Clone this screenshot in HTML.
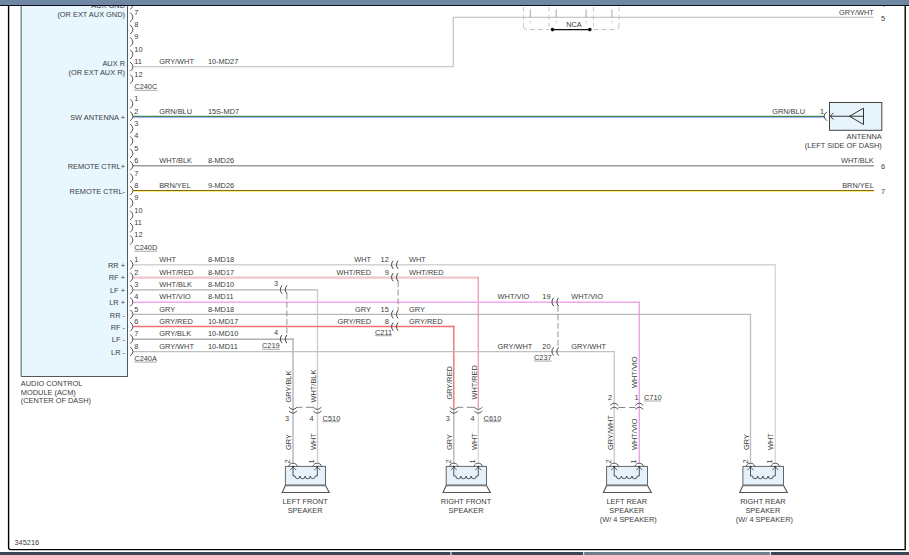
<!DOCTYPE html>
<html><head><meta charset="utf-8"><style>
html,body{margin:0;padding:0;background:#fff;width:909px;height:555px;overflow:hidden}
svg{position:absolute;left:0;top:0;font-family:"Liberation Sans",sans-serif}
</style></head><body>
<svg width="909" height="555" viewBox="0 0 909 555">
<rect x="0" y="0" width="909" height="555" fill="#fff"/>
<rect x="21.4" y="3" width="106.1" height="373.50" fill="#e8f6fe" stroke="#585858" stroke-width="1"/>
<line x1="21.20" y1="5.00" x2="21.20" y2="376.50" stroke="#929696" stroke-width="1.4" />
<polyline points="133.00,66.72 453.30,66.72 453.30,17.30 873.50,17.30" fill="none" stroke="#c8c8c8" stroke-width="1.3" />
<line x1="133.00" y1="116.39" x2="824.00" y2="116.39" stroke="#3a8a5c" stroke-width="1.2" />
<line x1="133.00" y1="117.54" x2="824.00" y2="117.54" stroke="#a8a0f8" stroke-width="0.9" />
<line x1="133.00" y1="165.76" x2="874.00" y2="165.76" stroke="#9c9c9c" stroke-width="1.3" />
<line x1="133.00" y1="190.52" x2="874.00" y2="190.52" stroke="#8a6810" stroke-width="1.1" />
<line x1="133.00" y1="191.62" x2="874.00" y2="191.62" stroke="#f4ea60" stroke-width="0.9" />
<line x1="133.00" y1="264.80" x2="776.00" y2="264.80" stroke="#d4d4d4" stroke-width="1.4" />
<line x1="775.30" y1="264.10" x2="775.30" y2="463.20" stroke="#d6d6d6" stroke-width="1.3" />
<line x1="133.00" y1="276.88" x2="478.30" y2="276.88" stroke="#d8cfc8" stroke-width="0.9" />
<line x1="133.00" y1="277.98" x2="478.90" y2="277.98" stroke="#f4a0b0" stroke-width="1.2" />
<line x1="478.30" y1="276.88" x2="478.30" y2="408.00" stroke="#f29aa8" stroke-width="1.3" />
<line x1="478.30" y1="408.00" x2="478.30" y2="463.20" stroke="#d4d4d4" stroke-width="1.3" />
<line x1="133.00" y1="289.86" x2="318.20" y2="289.86" stroke="#b2b2b2" stroke-width="1.4" />
<line x1="317.50" y1="289.16" x2="317.50" y2="463.20" stroke="#cecece" stroke-width="1.4" />
<line x1="133.00" y1="302.34" x2="640.00" y2="302.34" stroke="#f0a8f0" stroke-width="1.5" />
<line x1="639.30" y1="301.64" x2="639.30" y2="463.20" stroke="#eca4ec" stroke-width="1.5" />
<line x1="133.00" y1="314.42" x2="751.20" y2="314.42" stroke="#b8b8b8" stroke-width="1.4" />
<line x1="750.50" y1="313.72" x2="750.50" y2="463.20" stroke="#bcbcbc" stroke-width="1.3" />
<line x1="133.00" y1="326.50" x2="454.50" y2="326.50" stroke="#f07070" stroke-width="1.5" />
<line x1="453.80" y1="325.80" x2="453.80" y2="408.00" stroke="#f07474" stroke-width="1.4" />
<line x1="453.80" y1="408.00" x2="453.80" y2="463.20" stroke="#b4b4b4" stroke-width="1.4" />
<line x1="133.00" y1="339.18" x2="293.80" y2="339.18" stroke="#b0b0b0" stroke-width="1.6" />
<line x1="293.00" y1="338.38" x2="293.00" y2="463.20" stroke="#b8b8b8" stroke-width="1.5" />
<line x1="133.00" y1="351.66" x2="614.90" y2="351.66" stroke="#c0c0c0" stroke-width="1.4" />
<line x1="614.20" y1="350.96" x2="614.20" y2="463.20" stroke="#c4c4c4" stroke-width="1.3" />
<path d="M130.2,0.22 Q135.6,4.82 130.2,9.42" fill="none" stroke="#4c4c4c" stroke-width="0.95" />
<text x="134.30" y="2.22" text-anchor="start" font-size="7.4" fill="#3c3c3c" >6</text>
<path d="M130.2,12.60 Q135.6,17.20 130.2,21.80" fill="none" stroke="#4c4c4c" stroke-width="0.95" />
<text x="134.30" y="14.60" text-anchor="start" font-size="7.4" fill="#3c3c3c" >7</text>
<path d="M130.2,24.98 Q135.6,29.58 130.2,34.18" fill="none" stroke="#4c4c4c" stroke-width="0.95" />
<text x="134.30" y="26.98" text-anchor="start" font-size="7.4" fill="#3c3c3c" >8</text>
<path d="M130.2,37.36 Q135.6,41.96 130.2,46.56" fill="none" stroke="#4c4c4c" stroke-width="0.95" />
<text x="134.30" y="39.36" text-anchor="start" font-size="7.4" fill="#3c3c3c" >9</text>
<path d="M130.2,49.74 Q135.6,54.34 130.2,58.94" fill="none" stroke="#4c4c4c" stroke-width="0.95" />
<text x="134.30" y="51.74" text-anchor="start" font-size="7.4" fill="#3c3c3c" >10</text>
<path d="M130.2,62.12 Q135.6,66.72 130.2,71.32" fill="none" stroke="#4c4c4c" stroke-width="0.95" />
<text x="134.30" y="64.12" text-anchor="start" font-size="7.4" fill="#3c3c3c" >11</text>
<path d="M130.2,74.50 Q135.6,79.10 130.2,83.70" fill="none" stroke="#4c4c4c" stroke-width="0.95" />
<text x="134.30" y="76.50" text-anchor="start" font-size="7.4" fill="#3c3c3c" >12</text>
<path d="M130.2,99.26 Q135.6,103.86 130.2,108.46" fill="none" stroke="#4c4c4c" stroke-width="0.95" />
<text x="134.30" y="101.26" text-anchor="start" font-size="7.4" fill="#3c3c3c" >1</text>
<path d="M130.2,111.64 Q135.6,116.24 130.2,120.84" fill="none" stroke="#4c4c4c" stroke-width="0.95" />
<text x="134.30" y="113.64" text-anchor="start" font-size="7.4" fill="#3c3c3c" >2</text>
<path d="M130.2,124.02 Q135.6,128.62 130.2,133.22" fill="none" stroke="#4c4c4c" stroke-width="0.95" />
<text x="134.30" y="126.02" text-anchor="start" font-size="7.4" fill="#3c3c3c" >3</text>
<path d="M130.2,136.40 Q135.6,141.00 130.2,145.60" fill="none" stroke="#4c4c4c" stroke-width="0.95" />
<text x="134.30" y="138.40" text-anchor="start" font-size="7.4" fill="#3c3c3c" >4</text>
<path d="M130.2,148.78 Q135.6,153.38 130.2,157.98" fill="none" stroke="#4c4c4c" stroke-width="0.95" />
<text x="134.30" y="150.78" text-anchor="start" font-size="7.4" fill="#3c3c3c" >5</text>
<path d="M130.2,161.16 Q135.6,165.76 130.2,170.36" fill="none" stroke="#4c4c4c" stroke-width="0.95" />
<text x="134.30" y="163.16" text-anchor="start" font-size="7.4" fill="#3c3c3c" >6</text>
<path d="M130.2,173.54 Q135.6,178.14 130.2,182.74" fill="none" stroke="#4c4c4c" stroke-width="0.95" />
<text x="134.30" y="175.54" text-anchor="start" font-size="7.4" fill="#3c3c3c" >7</text>
<path d="M130.2,185.92 Q135.6,190.52 130.2,195.12" fill="none" stroke="#4c4c4c" stroke-width="0.95" />
<text x="134.30" y="187.92" text-anchor="start" font-size="7.4" fill="#3c3c3c" >8</text>
<path d="M130.2,198.30 Q135.6,202.90 130.2,207.50" fill="none" stroke="#4c4c4c" stroke-width="0.95" />
<text x="134.30" y="200.30" text-anchor="start" font-size="7.4" fill="#3c3c3c" >9</text>
<path d="M130.2,210.68 Q135.6,215.28 130.2,219.88" fill="none" stroke="#4c4c4c" stroke-width="0.95" />
<text x="134.30" y="212.68" text-anchor="start" font-size="7.4" fill="#3c3c3c" >10</text>
<path d="M130.2,223.06 Q135.6,227.66 130.2,232.26" fill="none" stroke="#4c4c4c" stroke-width="0.95" />
<text x="134.30" y="225.06" text-anchor="start" font-size="7.4" fill="#3c3c3c" >11</text>
<path d="M130.2,235.44 Q135.6,240.04 130.2,244.64" fill="none" stroke="#4c4c4c" stroke-width="0.95" />
<text x="134.30" y="237.44" text-anchor="start" font-size="7.4" fill="#3c3c3c" >12</text>
<path d="M130.2,260.20 Q135.6,264.80 130.2,269.40" fill="none" stroke="#4c4c4c" stroke-width="0.95" />
<text x="134.30" y="262.20" text-anchor="start" font-size="7.4" fill="#3c3c3c" >1</text>
<path d="M130.2,272.58 Q135.6,277.18 130.2,281.78" fill="none" stroke="#4c4c4c" stroke-width="0.95" />
<text x="134.30" y="274.58" text-anchor="start" font-size="7.4" fill="#3c3c3c" >2</text>
<path d="M130.2,284.96 Q135.6,289.56 130.2,294.16" fill="none" stroke="#4c4c4c" stroke-width="0.95" />
<text x="134.30" y="286.96" text-anchor="start" font-size="7.4" fill="#3c3c3c" >3</text>
<path d="M130.2,297.34 Q135.6,301.94 130.2,306.54" fill="none" stroke="#4c4c4c" stroke-width="0.95" />
<text x="134.30" y="299.34" text-anchor="start" font-size="7.4" fill="#3c3c3c" >4</text>
<path d="M130.2,309.72 Q135.6,314.32 130.2,318.92" fill="none" stroke="#4c4c4c" stroke-width="0.95" />
<text x="134.30" y="311.72" text-anchor="start" font-size="7.4" fill="#3c3c3c" >5</text>
<path d="M130.2,322.10 Q135.6,326.70 130.2,331.30" fill="none" stroke="#4c4c4c" stroke-width="0.95" />
<text x="134.30" y="324.10" text-anchor="start" font-size="7.4" fill="#3c3c3c" >6</text>
<path d="M130.2,334.48 Q135.6,339.08 130.2,343.68" fill="none" stroke="#4c4c4c" stroke-width="0.95" />
<text x="134.30" y="336.48" text-anchor="start" font-size="7.4" fill="#3c3c3c" >7</text>
<path d="M130.2,346.86 Q135.6,351.46 130.2,356.06" fill="none" stroke="#4c4c4c" stroke-width="0.95" />
<text x="134.30" y="348.86" text-anchor="start" font-size="7.4" fill="#3c3c3c" >8</text>
<text x="134.30" y="89.30" text-anchor="start" font-size="7.4" fill="#3c3c3c" >C240C</text>
<line x1="134.30" y1="90.30" x2="157.30" y2="90.30" stroke="#8a8a8a" stroke-width="0.75" />
<text x="134.30" y="250.24" text-anchor="start" font-size="7.4" fill="#3c3c3c" >C240D</text>
<line x1="134.30" y1="251.24" x2="157.30" y2="251.24" stroke="#8a8a8a" stroke-width="0.75" />
<text x="134.30" y="361.06" text-anchor="start" font-size="7.4" fill="#3c3c3c" >C240A</text>
<line x1="134.30" y1="362.06" x2="156.80" y2="362.06" stroke="#8a8a8a" stroke-width="0.75" />
<text x="159.20" y="64.12" text-anchor="start" font-size="7.4" fill="#3c3c3c" >GRY/WHT</text>
<text x="207.90" y="64.12" text-anchor="start" font-size="7.4" fill="#3c3c3c" >10-MD27</text>
<text x="159.20" y="113.64" text-anchor="start" font-size="7.4" fill="#3c3c3c" >GRN/BLU</text>
<text x="207.90" y="113.64" text-anchor="start" font-size="7.4" fill="#3c3c3c" >15S-MD7</text>
<text x="159.20" y="163.16" text-anchor="start" font-size="7.4" fill="#3c3c3c" >WHT/BLK</text>
<text x="207.90" y="163.16" text-anchor="start" font-size="7.4" fill="#3c3c3c" >8-MD26</text>
<text x="159.20" y="187.92" text-anchor="start" font-size="7.4" fill="#3c3c3c" >BRN/YEL</text>
<text x="207.90" y="187.92" text-anchor="start" font-size="7.4" fill="#3c3c3c" >9-MD26</text>
<text x="159.20" y="262.20" text-anchor="start" font-size="7.4" fill="#3c3c3c" >WHT</text>
<text x="207.90" y="262.20" text-anchor="start" font-size="7.4" fill="#3c3c3c" >8-MD18</text>
<text x="159.20" y="274.58" text-anchor="start" font-size="7.4" fill="#3c3c3c" >WHT/RED</text>
<text x="207.90" y="274.58" text-anchor="start" font-size="7.4" fill="#3c3c3c" >8-MD17</text>
<text x="159.20" y="286.96" text-anchor="start" font-size="7.4" fill="#3c3c3c" >WHT/BLK</text>
<text x="207.90" y="286.96" text-anchor="start" font-size="7.4" fill="#3c3c3c" >8-MD10</text>
<text x="159.20" y="299.34" text-anchor="start" font-size="7.4" fill="#3c3c3c" >WHT/VIO</text>
<text x="207.90" y="299.34" text-anchor="start" font-size="7.4" fill="#3c3c3c" >8-MD11</text>
<text x="159.20" y="311.72" text-anchor="start" font-size="7.4" fill="#3c3c3c" >GRY</text>
<text x="207.90" y="311.72" text-anchor="start" font-size="7.4" fill="#3c3c3c" >8-MD18</text>
<text x="159.20" y="324.10" text-anchor="start" font-size="7.4" fill="#3c3c3c" >GRY/RED</text>
<text x="207.90" y="324.10" text-anchor="start" font-size="7.4" fill="#3c3c3c" >10-MD17</text>
<text x="159.20" y="336.48" text-anchor="start" font-size="7.4" fill="#3c3c3c" >GRY/BLK</text>
<text x="207.90" y="336.48" text-anchor="start" font-size="7.4" fill="#3c3c3c" >10-MD10</text>
<text x="159.20" y="348.86" text-anchor="start" font-size="7.4" fill="#3c3c3c" >GRY/WHT</text>
<text x="207.90" y="348.86" text-anchor="start" font-size="7.4" fill="#3c3c3c" >10-MD11</text>
<text x="125.00" y="7.80" text-anchor="end" font-size="7.4" fill="#3c3c3c" >AUX GND</text>
<text x="125.00" y="17.00" text-anchor="end" font-size="7.4" fill="#3c3c3c" >(OR EXT AUX GND)</text>
<text x="125.00" y="65.80" text-anchor="end" font-size="7.4" fill="#3c3c3c" >AUX R</text>
<text x="125.00" y="75.00" text-anchor="end" font-size="7.4" fill="#3c3c3c" >(OR EXT AUX R)</text>
<text x="125.00" y="119.54" text-anchor="end" font-size="7.4" fill="#3c3c3c" >SW ANTENNA +</text>
<text x="125.00" y="169.06" text-anchor="end" font-size="7.4" fill="#3c3c3c" >REMOTE CTRL+</text>
<text x="125.00" y="193.82" text-anchor="end" font-size="7.4" fill="#3c3c3c" >REMOTE CTRL-</text>
<text x="125.00" y="268.10" text-anchor="end" font-size="7.4" fill="#3c3c3c" >RR +</text>
<text x="125.00" y="280.48" text-anchor="end" font-size="7.4" fill="#3c3c3c" >RF +</text>
<text x="125.00" y="292.86" text-anchor="end" font-size="7.4" fill="#3c3c3c" >LF +</text>
<text x="125.00" y="305.24" text-anchor="end" font-size="7.4" fill="#3c3c3c" >LR +</text>
<text x="125.00" y="317.62" text-anchor="end" font-size="7.4" fill="#3c3c3c" >RR -</text>
<text x="125.00" y="330.00" text-anchor="end" font-size="7.4" fill="#3c3c3c" >RF -</text>
<text x="125.00" y="342.38" text-anchor="end" font-size="7.4" fill="#3c3c3c" >LF -</text>
<text x="125.00" y="354.76" text-anchor="end" font-size="7.4" fill="#3c3c3c" >LR -</text>
<text x="20.80" y="385.70" text-anchor="start" font-size="7.4" fill="#3c3c3c" >AUDIO CONTROL</text>
<text x="20.80" y="394.50" text-anchor="start" font-size="7.4" fill="#3c3c3c" >MODULE (ACM)</text>
<text x="20.80" y="403.20" text-anchor="start" font-size="7.4" fill="#3c3c3c" >(CENTER OF DASH)</text>
<path d="M393.20,260.70 Q389.90,264.80 393.20,268.90" fill="none" stroke="#444" stroke-width="1.0" />
<path d="M398.10,260.70 Q394.80,264.80 398.10,268.90" fill="none" stroke="#444" stroke-width="1.0" />
<text x="371.00" y="262.20" text-anchor="end" font-size="7.4" fill="#3c3c3c" >WHT</text>
<text x="388.80" y="262.20" text-anchor="end" font-size="7.4" fill="#3c3c3c" >12</text>
<text x="409.00" y="262.20" text-anchor="start" font-size="7.4" fill="#3c3c3c" >WHT</text>
<path d="M393.20,273.08 Q389.90,277.18 393.20,281.28" fill="none" stroke="#444" stroke-width="1.0" />
<path d="M398.10,273.08 Q394.80,277.18 398.10,281.28" fill="none" stroke="#444" stroke-width="1.0" />
<text x="371.00" y="274.58" text-anchor="end" font-size="7.4" fill="#3c3c3c" >WHT/RED</text>
<text x="388.80" y="274.58" text-anchor="end" font-size="7.4" fill="#3c3c3c" >9</text>
<text x="409.00" y="274.58" text-anchor="start" font-size="7.4" fill="#3c3c3c" >WHT/RED</text>
<path d="M393.20,310.22 Q389.90,314.32 393.20,318.42" fill="none" stroke="#444" stroke-width="1.0" />
<path d="M398.10,310.22 Q394.80,314.32 398.10,318.42" fill="none" stroke="#444" stroke-width="1.0" />
<text x="371.00" y="311.72" text-anchor="end" font-size="7.4" fill="#3c3c3c" >GRY</text>
<text x="388.80" y="311.72" text-anchor="end" font-size="7.4" fill="#3c3c3c" >15</text>
<text x="409.00" y="311.72" text-anchor="start" font-size="7.4" fill="#3c3c3c" >GRY</text>
<path d="M393.20,322.60 Q389.90,326.70 393.20,330.80" fill="none" stroke="#444" stroke-width="1.0" />
<path d="M398.10,322.60 Q394.80,326.70 398.10,330.80" fill="none" stroke="#444" stroke-width="1.0" />
<text x="371.00" y="324.10" text-anchor="end" font-size="7.4" fill="#3c3c3c" >GRY/RED</text>
<text x="388.80" y="324.10" text-anchor="end" font-size="7.4" fill="#3c3c3c" >8</text>
<text x="409.00" y="324.10" text-anchor="start" font-size="7.4" fill="#3c3c3c" >GRY/RED</text>
<line x1="398.10" y1="281.08" x2="398.10" y2="310.42" stroke="#777" stroke-width="0.8" stroke-dasharray="6,2.5"/>
<text x="375.00" y="334.70" text-anchor="start" font-size="7.4" fill="#3c3c3c" >C211</text>
<line x1="375.00" y1="335.70" x2="391.50" y2="335.70" stroke="#8a8a8a" stroke-width="0.75" />
<path d="M282.00,285.46 Q278.70,289.56 282.00,293.66" fill="none" stroke="#444" stroke-width="1.0" />
<path d="M286.90,285.46 Q283.60,289.56 286.90,293.66" fill="none" stroke="#444" stroke-width="1.0" />
<text x="278.20" y="285.96" text-anchor="end" font-size="7.4" fill="#3c3c3c" >3</text>
<path d="M282.00,334.98 Q278.70,339.08 282.00,343.18" fill="none" stroke="#444" stroke-width="1.0" />
<path d="M286.90,334.98 Q283.60,339.08 286.90,343.18" fill="none" stroke="#444" stroke-width="1.0" />
<text x="278.20" y="335.48" text-anchor="end" font-size="7.4" fill="#3c3c3c" >4</text>
<line x1="286.90" y1="293.46" x2="286.90" y2="335.18" stroke="#777" stroke-width="0.8" stroke-dasharray="6,2.5"/>
<text x="262.00" y="348.28" text-anchor="start" font-size="7.4" fill="#3c3c3c" >C219</text>
<line x1="262.00" y1="349.28" x2="280.00" y2="349.28" stroke="#8a8a8a" stroke-width="0.75" />
<path d="M553.60,297.84 Q550.30,301.94 553.60,306.04" fill="none" stroke="#444" stroke-width="1.0" />
<path d="M558.50,297.84 Q555.20,301.94 558.50,306.04" fill="none" stroke="#444" stroke-width="1.0" />
<text x="497.60" y="299.34" text-anchor="start" font-size="7.4" fill="#3c3c3c" >WHT/VIO</text>
<text x="550.50" y="299.34" text-anchor="end" font-size="7.4" fill="#3c3c3c" >19</text>
<text x="571.30" y="299.34" text-anchor="start" font-size="7.4" fill="#3c3c3c" >WHT/VIO</text>
<path d="M553.60,347.36 Q550.30,351.46 553.60,355.56" fill="none" stroke="#444" stroke-width="1.0" />
<path d="M558.50,347.36 Q555.20,351.46 558.50,355.56" fill="none" stroke="#444" stroke-width="1.0" />
<text x="497.60" y="348.86" text-anchor="start" font-size="7.4" fill="#3c3c3c" >GRY/WHT</text>
<text x="550.50" y="348.86" text-anchor="end" font-size="7.4" fill="#3c3c3c" >20</text>
<text x="571.30" y="348.86" text-anchor="start" font-size="7.4" fill="#3c3c3c" >GRY/WHT</text>
<line x1="558.00" y1="305.84" x2="558.00" y2="347.56" stroke="#777" stroke-width="0.8" stroke-dasharray="6,2.5"/>
<text x="534.00" y="360.06" text-anchor="start" font-size="7.4" fill="#3c3c3c" >C237</text>
<line x1="534.00" y1="361.06" x2="551.50" y2="361.06" stroke="#8a8a8a" stroke-width="0.75" />
<path d="M289.00,407.20 Q293.00,411.60 297.00,407.20" fill="none" stroke="#444" stroke-width="0.9" />
<path d="M289.00,411.00 Q293.00,415.40 297.00,411.00" fill="none" stroke="#444" stroke-width="0.9" />
<path d="M313.30,407.20 Q317.30,411.60 321.30,407.20" fill="none" stroke="#444" stroke-width="0.9" />
<path d="M313.30,411.00 Q317.30,415.40 321.30,411.00" fill="none" stroke="#444" stroke-width="0.9" />
<line x1="297.00" y1="407.30" x2="302.50" y2="407.30" stroke="#666" stroke-width="0.8" />
<line x1="306.00" y1="407.30" x2="313.30" y2="407.30" stroke="#666" stroke-width="0.8" />
<text x="285.00" y="420.70" text-anchor="start" font-size="7.4" fill="#3c3c3c" >3</text>
<text x="309.50" y="420.70" text-anchor="start" font-size="7.4" fill="#3c3c3c" >4</text>
<text x="322.60" y="420.70" text-anchor="start" font-size="7.4" fill="#3c3c3c" >C510</text>
<line x1="322.60" y1="421.70" x2="339.60" y2="421.70" stroke="#8a8a8a" stroke-width="0.75" />
<path d="M449.80,407.20 Q453.80,411.60 457.80,407.20" fill="none" stroke="#444" stroke-width="0.9" />
<path d="M449.80,411.00 Q453.80,415.40 457.80,411.00" fill="none" stroke="#444" stroke-width="0.9" />
<path d="M474.30,407.20 Q478.30,411.60 482.30,407.20" fill="none" stroke="#444" stroke-width="0.9" />
<path d="M474.30,411.00 Q478.30,415.40 482.30,411.00" fill="none" stroke="#444" stroke-width="0.9" />
<line x1="457.80" y1="407.30" x2="463.30" y2="407.30" stroke="#666" stroke-width="0.8" />
<line x1="466.80" y1="407.30" x2="474.30" y2="407.30" stroke="#666" stroke-width="0.8" />
<text x="445.80" y="420.70" text-anchor="start" font-size="7.4" fill="#3c3c3c" >3</text>
<text x="470.50" y="420.70" text-anchor="start" font-size="7.4" fill="#3c3c3c" >4</text>
<text x="483.60" y="420.70" text-anchor="start" font-size="7.4" fill="#3c3c3c" >C610</text>
<line x1="483.60" y1="421.70" x2="500.60" y2="421.70" stroke="#8a8a8a" stroke-width="0.75" />
<path d="M610.20,405.40 Q614.20,401.00 618.20,405.40" fill="none" stroke="#444" stroke-width="0.9" />
<path d="M610.20,409.40 Q614.20,405.00 618.20,409.40" fill="none" stroke="#444" stroke-width="0.9" />
<path d="M635.30,405.40 Q639.30,401.00 643.30,405.40" fill="none" stroke="#444" stroke-width="0.9" />
<path d="M635.30,409.40 Q639.30,405.00 643.30,409.40" fill="none" stroke="#444" stroke-width="0.9" />
<line x1="618.20" y1="407.50" x2="635.30" y2="407.50" stroke="#666" stroke-width="0.8" stroke-dasharray="7,4"/>
<text x="608.00" y="399.80" text-anchor="start" font-size="7.4" fill="#3c3c3c" >2</text>
<text x="634.50" y="399.80" text-anchor="start" font-size="7.4" fill="#3c3c3c" >1</text>
<text x="644.00" y="400.00" text-anchor="start" font-size="7.4" fill="#3c3c3c" >C710</text>
<line x1="644.00" y1="401.00" x2="661.00" y2="401.00" stroke="#8a8a8a" stroke-width="0.75" />
<text transform="translate(291.30,402.50) rotate(-90)" font-size="7.4" fill="#3c3c3c">GRY/BLK</text>
<text transform="translate(315.80,402.50) rotate(-90)" font-size="7.4" fill="#3c3c3c">WHT/BLK</text>
<text transform="translate(291.30,450.00) rotate(-90)" font-size="7.4" fill="#3c3c3c">GRY</text>
<text transform="translate(315.80,450.00) rotate(-90)" font-size="7.4" fill="#3c3c3c">WHT</text>
<text transform="translate(452.40,399.60) rotate(-90)" font-size="7.4" fill="#3c3c3c">GRY/RED</text>
<text transform="translate(476.90,399.60) rotate(-90)" font-size="7.4" fill="#3c3c3c">WHT/RED</text>
<text transform="translate(452.40,450.00) rotate(-90)" font-size="7.4" fill="#3c3c3c">GRY</text>
<text transform="translate(476.60,450.00) rotate(-90)" font-size="7.4" fill="#3c3c3c">WHT</text>
<text transform="translate(636.60,388.00) rotate(-90)" font-size="7.4" fill="#3c3c3c">WHT/VIO</text>
<text transform="translate(613.10,450.00) rotate(-90)" font-size="7.4" fill="#3c3c3c">GRY/WHT</text>
<text transform="translate(636.90,450.00) rotate(-90)" font-size="7.4" fill="#3c3c3c">WHT/VIO</text>
<text transform="translate(749.10,450.00) rotate(-90)" font-size="7.4" fill="#3c3c3c">GRY</text>
<text transform="translate(773.40,450.00) rotate(-90)" font-size="7.4" fill="#3c3c3c">WHT</text>
<rect x="285.40" y="466.4" width="40.10" height="19" fill="#e6f2fb" stroke="#666" stroke-width="1"/>
<line x1="285.40" y1="485.40" x2="325.50" y2="485.40" stroke="#777" stroke-width="1.6" />
<polyline points="285.40,485.60 282.20,492.50 329.30,492.50 325.50,485.60" fill="none" stroke="#555" stroke-width="1.1" />
<path d="M288.70,466.4 C289.40,462.2 296.60,462.2 297.30,466.4" fill="none" stroke="#444" stroke-width="0.9" />
<circle cx="293.00" cy="466.6" r="0.9" fill="#222"/>
<polyline points="290.00,470.20 293.00,467.00 296.00,470.20" fill="none" stroke="#555" stroke-width="0.9" />
<path d="M313.00,466.4 C313.70,462.2 320.90,462.2 321.60,466.4" fill="none" stroke="#444" stroke-width="0.9" />
<circle cx="317.30" cy="466.6" r="0.9" fill="#222"/>
<polyline points="314.30,470.20 317.30,467.00 320.30,470.20" fill="none" stroke="#555" stroke-width="0.9" />
<path d="M293.00,467.0 L293.00,476.0 L295.00,476.0 A2.54,2.8 0 0 0 300.07,476.0 A2.54,2.8 0 0 0 305.15,476.0 A2.54,2.8 0 0 0 310.23,476.0 A2.54,2.8 0 0 0 315.30,476.0 L317.30,476.0 L317.30,467.0" fill="none" stroke="#444" stroke-width="0.9" />
<text transform="translate(290.00,463.50) rotate(-90)" font-size="7.4" fill="#3c3c3c">2</text>
<text transform="translate(314.30,463.50) rotate(-90)" font-size="7.4" fill="#3c3c3c">1</text>
<text x="305.15" y="503.50" text-anchor="middle" font-size="7.4" fill="#3c3c3c" >LEFT FRONT</text>
<text x="305.15" y="512.50" text-anchor="middle" font-size="7.4" fill="#3c3c3c" >SPEAKER</text>
<rect x="446.20" y="466.4" width="40.30" height="19" fill="#e6f2fb" stroke="#666" stroke-width="1"/>
<line x1="446.20" y1="485.40" x2="486.50" y2="485.40" stroke="#777" stroke-width="1.6" />
<polyline points="446.20,485.60 443.00,492.50 490.30,492.50 486.50,485.60" fill="none" stroke="#555" stroke-width="1.1" />
<path d="M449.50,466.4 C450.20,462.2 457.40,462.2 458.10,466.4" fill="none" stroke="#444" stroke-width="0.9" />
<circle cx="453.80" cy="466.6" r="0.9" fill="#222"/>
<polyline points="450.80,470.20 453.80,467.00 456.80,470.20" fill="none" stroke="#555" stroke-width="0.9" />
<path d="M474.00,466.4 C474.70,462.2 481.90,462.2 482.60,466.4" fill="none" stroke="#444" stroke-width="0.9" />
<circle cx="478.30" cy="466.6" r="0.9" fill="#222"/>
<polyline points="475.30,470.20 478.30,467.00 481.30,470.20" fill="none" stroke="#555" stroke-width="0.9" />
<path d="M453.80,467.0 L453.80,476.0 L455.80,476.0 A2.56,2.8 0 0 0 460.93,476.0 A2.56,2.8 0 0 0 466.05,476.0 A2.56,2.8 0 0 0 471.18,476.0 A2.56,2.8 0 0 0 476.30,476.0 L478.30,476.0 L478.30,467.0" fill="none" stroke="#444" stroke-width="0.9" />
<text transform="translate(450.80,463.50) rotate(-90)" font-size="7.4" fill="#3c3c3c">2</text>
<text transform="translate(475.30,463.50) rotate(-90)" font-size="7.4" fill="#3c3c3c">1</text>
<text x="466.05" y="503.50" text-anchor="middle" font-size="7.4" fill="#3c3c3c" >RIGHT FRONT</text>
<text x="466.05" y="512.50" text-anchor="middle" font-size="7.4" fill="#3c3c3c" >SPEAKER</text>
<rect x="606.60" y="466.4" width="40.90" height="19" fill="#e6f2fb" stroke="#666" stroke-width="1"/>
<line x1="606.60" y1="485.40" x2="647.50" y2="485.40" stroke="#777" stroke-width="1.6" />
<polyline points="606.60,485.60 603.40,492.50 651.30,492.50 647.50,485.60" fill="none" stroke="#555" stroke-width="1.1" />
<path d="M609.90,466.4 C610.60,462.2 617.80,462.2 618.50,466.4" fill="none" stroke="#444" stroke-width="0.9" />
<circle cx="614.20" cy="466.6" r="0.9" fill="#222"/>
<polyline points="611.20,470.20 614.20,467.00 617.20,470.20" fill="none" stroke="#555" stroke-width="0.9" />
<path d="M635.00,466.4 C635.70,462.2 642.90,462.2 643.60,466.4" fill="none" stroke="#444" stroke-width="0.9" />
<circle cx="639.30" cy="466.6" r="0.9" fill="#222"/>
<polyline points="636.30,470.20 639.30,467.00 642.30,470.20" fill="none" stroke="#555" stroke-width="0.9" />
<path d="M614.20,467.0 L614.20,476.0 L616.20,476.0 A2.64,2.8 0 0 0 621.48,476.0 A2.64,2.8 0 0 0 626.75,476.0 A2.64,2.8 0 0 0 632.02,476.0 A2.64,2.8 0 0 0 637.30,476.0 L639.30,476.0 L639.30,467.0" fill="none" stroke="#444" stroke-width="0.9" />
<text transform="translate(611.20,463.50) rotate(-90)" font-size="7.4" fill="#3c3c3c">2</text>
<text transform="translate(636.30,463.50) rotate(-90)" font-size="7.4" fill="#3c3c3c">1</text>
<text x="626.75" y="503.50" text-anchor="middle" font-size="7.4" fill="#3c3c3c" >LEFT REAR</text>
<text x="626.75" y="512.50" text-anchor="middle" font-size="7.4" fill="#3c3c3c" >SPEAKER</text>
<text x="628.25" y="521.50" text-anchor="middle" font-size="7.4" fill="#3c3c3c" >(W/ 4 SPEAKER)</text>
<rect x="742.90" y="466.4" width="40.60" height="19" fill="#e6f2fb" stroke="#666" stroke-width="1"/>
<line x1="742.90" y1="485.40" x2="783.50" y2="485.40" stroke="#777" stroke-width="1.6" />
<polyline points="742.90,485.60 739.70,492.50 787.30,492.50 783.50,485.60" fill="none" stroke="#555" stroke-width="1.1" />
<path d="M746.20,466.4 C746.90,462.2 754.10,462.2 754.80,466.4" fill="none" stroke="#444" stroke-width="0.9" />
<circle cx="750.50" cy="466.6" r="0.9" fill="#222"/>
<polyline points="747.50,470.20 750.50,467.00 753.50,470.20" fill="none" stroke="#555" stroke-width="0.9" />
<path d="M771.00,466.4 C771.70,462.2 778.90,462.2 779.60,466.4" fill="none" stroke="#444" stroke-width="0.9" />
<circle cx="775.30" cy="466.6" r="0.9" fill="#222"/>
<polyline points="772.30,470.20 775.30,467.00 778.30,470.20" fill="none" stroke="#555" stroke-width="0.9" />
<path d="M750.50,467.0 L750.50,476.0 L752.50,476.0 A2.60,2.8 0 0 0 757.70,476.0 A2.60,2.8 0 0 0 762.90,476.0 A2.60,2.8 0 0 0 768.10,476.0 A2.60,2.8 0 0 0 773.30,476.0 L775.30,476.0 L775.30,467.0" fill="none" stroke="#444" stroke-width="0.9" />
<text transform="translate(747.50,463.50) rotate(-90)" font-size="7.4" fill="#3c3c3c">2</text>
<text transform="translate(772.30,463.50) rotate(-90)" font-size="7.4" fill="#3c3c3c">1</text>
<text x="762.90" y="503.50" text-anchor="middle" font-size="7.4" fill="#3c3c3c" >RIGHT REAR</text>
<text x="762.90" y="512.50" text-anchor="middle" font-size="7.4" fill="#3c3c3c" >SPEAKER</text>
<text x="764.40" y="521.50" text-anchor="middle" font-size="7.4" fill="#3c3c3c" >(W/ 4 SPEAKER)</text>
<rect x="829.5" y="102.5" width="52.3" height="27.8" fill="#e8f4fc" stroke="#444" stroke-width="1"/>
<path d="M827.0,111.74 Q821.2,116.24 827.0,120.74" fill="none" stroke="#444" stroke-width="1.0" />
<polyline points="833.40,112.94 830.20,116.24 833.40,119.54" fill="none" stroke="#333" stroke-width="1.0" />
<line x1="830.20" y1="116.24" x2="863.50" y2="116.24" stroke="#333" stroke-width="1.0" />
<polyline points="863.50,108.20 849.50,116.24 863.50,124.50 863.50,108.20" fill="none" stroke="#333" stroke-width="1.0" stroke-linejoin="round"/>
<text x="805.00" y="113.64" text-anchor="end" font-size="7.4" fill="#3c3c3c" >GRN/BLU</text>
<text x="824.00" y="113.64" text-anchor="end" font-size="7.4" fill="#3c3c3c" >1</text>
<text x="881.80" y="139.20" text-anchor="end" font-size="7.4" fill="#3c3c3c" >ANTENNA</text>
<text x="881.80" y="147.80" text-anchor="end" font-size="7.4" fill="#3c3c3c" >(LEFT SIDE OF DASH)</text>
<text x="873.80" y="15.00" text-anchor="end" font-size="7.4" fill="#3c3c3c" >GRY/WHT</text>
<text x="881.00" y="21.20" text-anchor="start" font-size="7.4" fill="#3c3c3c" >5</text>
<text x="873.80" y="163.00" text-anchor="end" font-size="7.4" fill="#3c3c3c" >WHT/BLK</text>
<text x="881.00" y="169.00" text-anchor="start" font-size="7.4" fill="#3c3c3c" >6</text>
<text x="873.80" y="188.00" text-anchor="end" font-size="7.4" fill="#3c3c3c" >BRN/YEL</text>
<text x="881.00" y="193.80" text-anchor="start" font-size="7.4" fill="#3c3c3c" >7</text>
<text x="881.00" y="7.00" text-anchor="start" font-size="7.4" fill="#3c3c3c" >4</text>
<line x1="523.50" y1="7.00" x2="523.50" y2="26.50" stroke="#b8b8b8" stroke-width="0.8" stroke-dasharray="4.5,3.5"/>
<line x1="549.00" y1="7.00" x2="549.00" y2="26.50" stroke="#b8b8b8" stroke-width="0.8" stroke-dasharray="4.5,3.5"/>
<line x1="593.50" y1="7.00" x2="593.50" y2="26.50" stroke="#b8b8b8" stroke-width="0.8" stroke-dasharray="4.5,3.5"/>
<line x1="619.00" y1="7.00" x2="619.00" y2="26.50" stroke="#b8b8b8" stroke-width="0.8" stroke-dasharray="4.5,3.5"/>
<line x1="530.30" y1="9.50" x2="530.30" y2="17.50" stroke="#909090" stroke-width="0.8" />
<line x1="530.30" y1="20.50" x2="530.30" y2="23.50" stroke="#c4c4c4" stroke-width="0.8" />
<line x1="556.20" y1="9.50" x2="556.20" y2="17.50" stroke="#909090" stroke-width="0.8" />
<line x1="556.20" y1="20.50" x2="556.20" y2="23.50" stroke="#c4c4c4" stroke-width="0.8" />
<line x1="586.10" y1="9.50" x2="586.10" y2="17.50" stroke="#909090" stroke-width="0.8" />
<line x1="586.10" y1="20.50" x2="586.10" y2="23.50" stroke="#c4c4c4" stroke-width="0.8" />
<line x1="611.90" y1="9.50" x2="611.90" y2="17.50" stroke="#909090" stroke-width="0.8" />
<line x1="611.90" y1="20.50" x2="611.90" y2="23.50" stroke="#c4c4c4" stroke-width="0.8" />
<path d="M523.5,26.5 Q524,29.5 527,29.5 L549,29.5" fill="none" stroke="#b4b4b4" stroke-width="0.8" stroke-dasharray="5,3"/>
<path d="M593.5,29.5 L616,29.5 Q619,29.5 619,26.5" fill="none" stroke="#b4b4b4" stroke-width="0.8" stroke-dasharray="5,3"/>
<line x1="552.50" y1="29.60" x2="589.80" y2="29.60" stroke="#111" stroke-width="1.3" />
<circle cx="552.5" cy="29.6" r="1.8" fill="#111"/>
<circle cx="589.8" cy="29.6" r="1.8" fill="#111"/>
<text x="574.00" y="27.00" text-anchor="middle" font-size="7.4" fill="#3c3c3c" >NCA</text>
<text x="14.50" y="545.20" text-anchor="start" font-size="7.4" fill="#3c3c3c" >345216</text>
<!-- frame -->
<rect x="0" y="0" width="909" height="5" fill="#6e88a4"/>
<rect x="0" y="4" width="909" height="1" fill="#7484a2"/>
<rect x="0" y="5" width="909" height="1" fill="#0a1220"/>
<path d="M8.6,6 L8.6,547.5 Q8.6,549.6 10.6,549.6 L905.2,549.6 L905.2,6" fill="none" stroke="#000" stroke-width="1.4"/>
<rect x="0" y="552" width="909" height="3" fill="#3a4656"/>
<rect x="450.3" y="552" width="1.4" height="3" fill="#c8d0d6"/>
<rect x="583" y="552" width="1.6" height="3" fill="#d0d8dc"/>
<rect x="584.6" y="552" width="185" height="3" fill="#6e7d88"/>
<rect x="769.6" y="552" width="1.5" height="3" fill="#d0d8dc"/>
</svg>
</body></html>
